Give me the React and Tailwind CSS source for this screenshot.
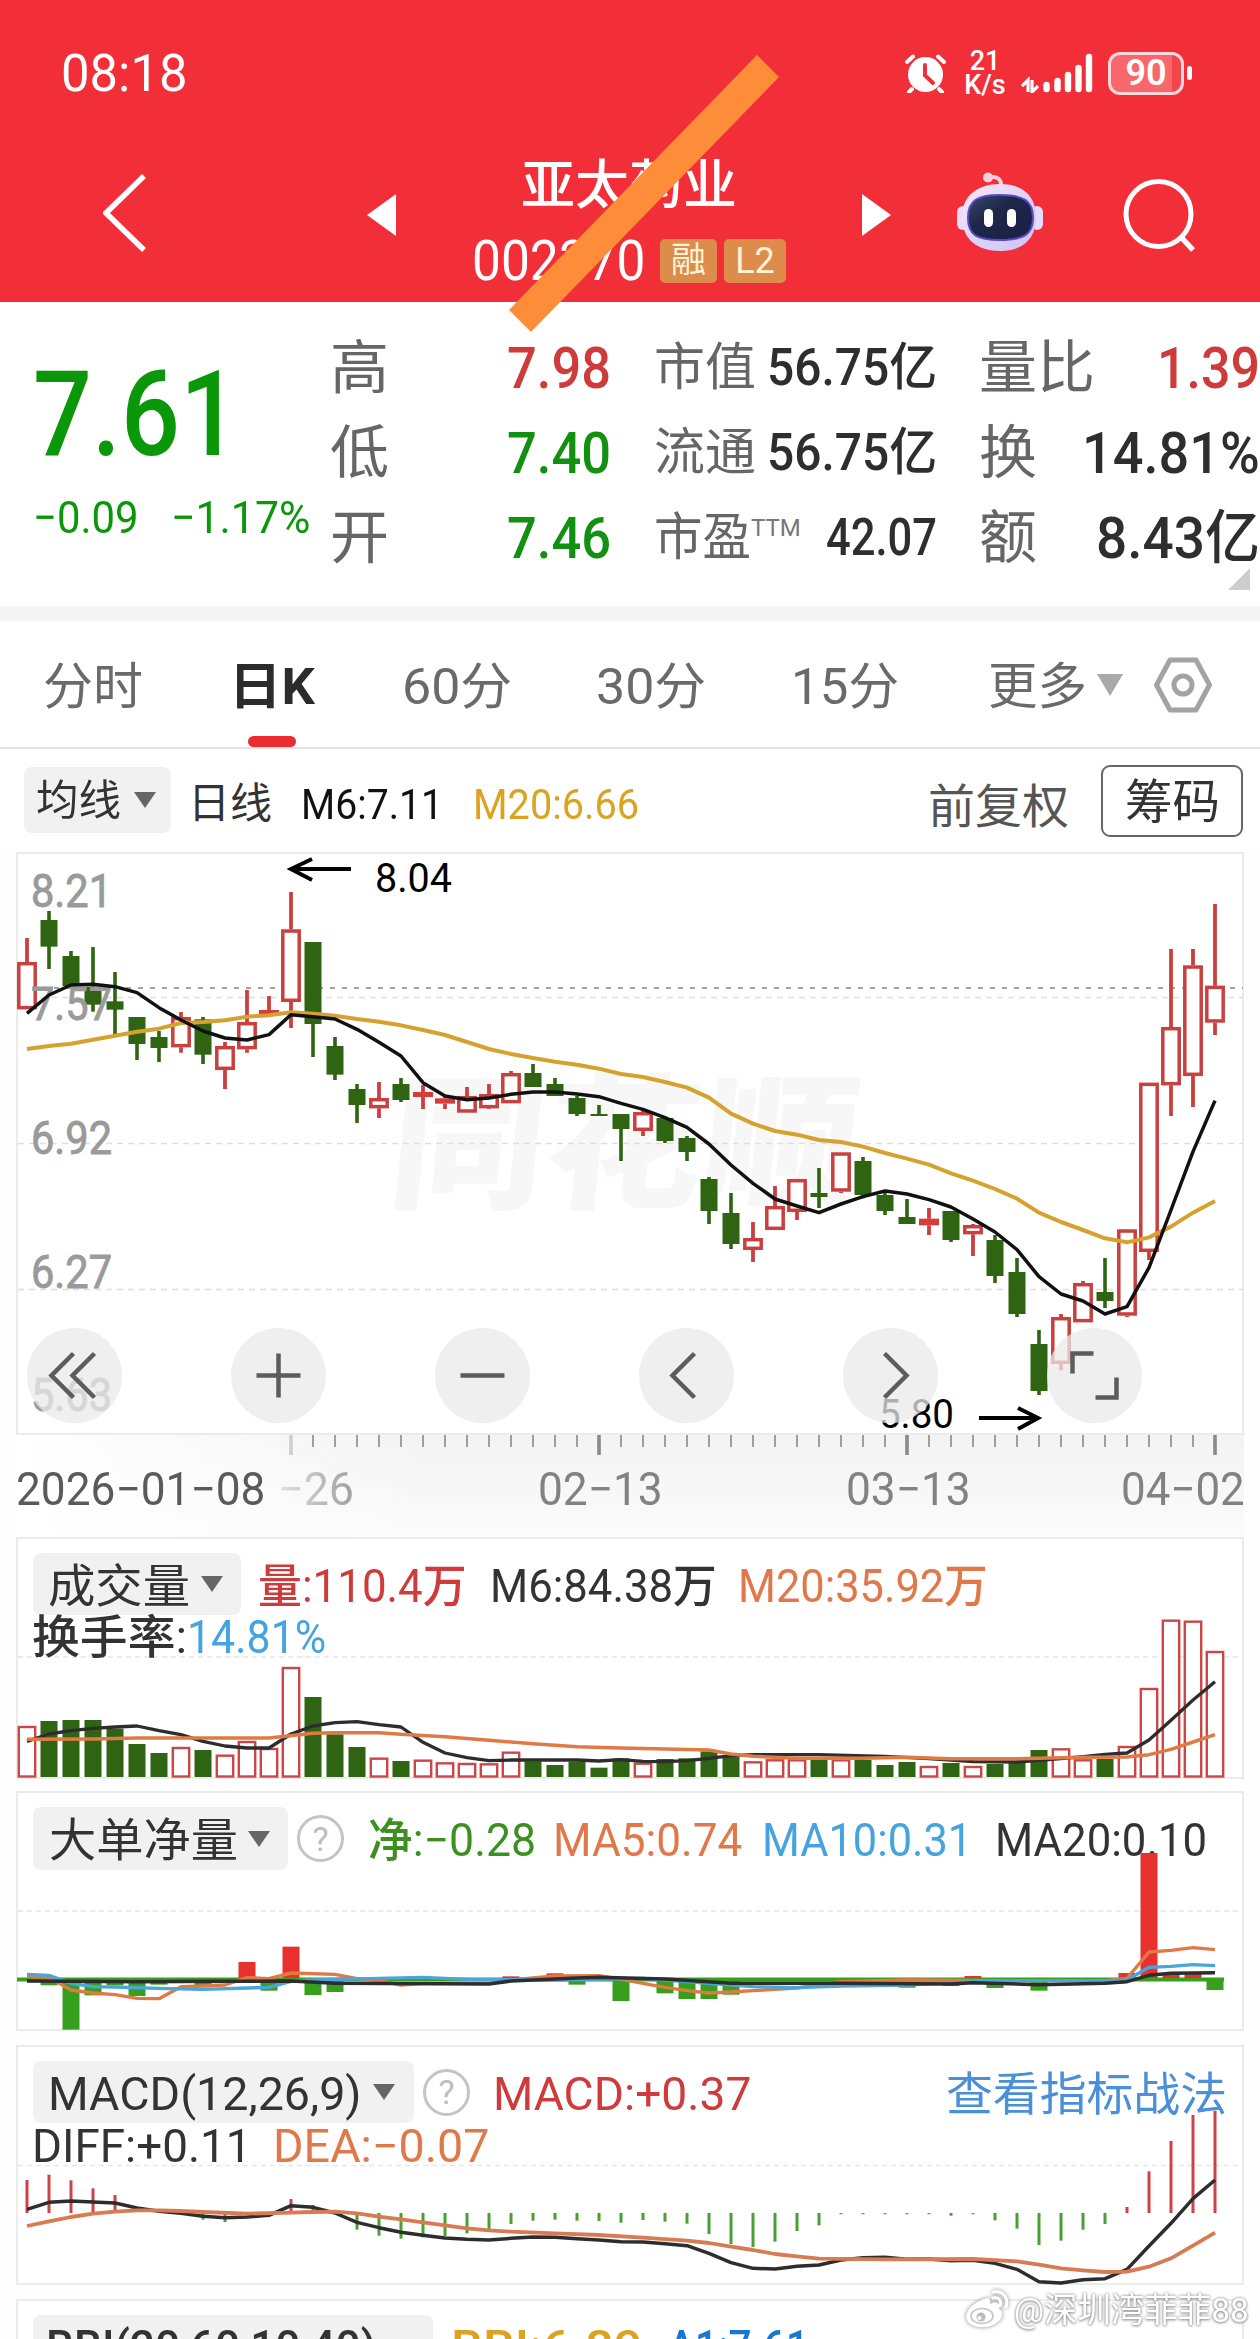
import React, { useLayoutEffect, useRef } from "react";

const RED = "#c9403f";
const GREEN = "#2f6512";
const CX = (i) => 27 + 22 * i;

/* Single line of text stretched or condensed to a fixed advance width. */
function Fit({ w, className = "", inner = "", children }) {
  const ref = useRef(null);
  useLayoutEffect(() => {
    const el = ref.current;
    el.style.transform = "none";
    const n = el.offsetWidth;
    if (n) el.style.transform = `scaleX(${w / n})`;
  }, [w]);
  return (
    <span className={"block shrink-0 leading-none whitespace-nowrap " + className} style={{ width: w }}>
      <span ref={ref} className={"inline-block origin-left align-top leading-none " + inner}>{children}</span>
    </span>
  );
}

function Caret({ className = "", color = "#666" }) {
  return (
    <svg viewBox="0 0 24 16" className={"h-4 w-6 shrink-0 " + className}>
      <path d="M1 0H23L12 16Z" fill={color} />
    </svg>
  );
}

function Help({ className = "" }) {
  return (
    <span className={"flex h-[47px] w-[47px] shrink-0 items-center justify-center rounded-full border-[3px] border-[#c4c4c4] text-[34px] leading-none text-[#bdbdbd] " + className}>
      ?
    </span>
  );
}

/* Series are stored as [index, value] knots or plain arrays, in thirds of a pixel below `top`. */
const toPoints = (data, top) =>
  data.map((d, i) => (Array.isArray(d) ? `${CX(d[0])},${top + d[1] / 3}` : `${CX(i)},${top + d / 3}`)).join(" ");

function Line({ data, top, color, width = 3.5 }) {
  return <polyline points={toPoints(data, top)} fill="none" stroke={color} strokeWidth={width} strokeLinejoin="round" />;
}

/* ---------- status bar + title ---------- */

function StatusBar() {
  return (
    <div className="flex h-[146px] items-center pl-[61px]">
      <Fit w={127} className="mt-[2px] text-[52px] font-[450]">08:18</Fit>
      <svg viewBox="0 0 41 39" className="ml-[717px] h-[39px] w-[41px] shrink-0">
        <circle cx="20.5" cy="20.5" r="17.5" fill="#fff" />
        <path d="M2 8L8 2.5M39 8L33 2.5M7 35L4 38M34 35L37 38" stroke="#fff" strokeWidth="4" strokeLinecap="round" />
        <path d="M20 11V21.5L28 29" stroke="#f22f38" strokeWidth="4" fill="none" strokeLinecap="round" />
      </svg>
      <div className="ml-[18px] flex w-[42px] shrink-0 flex-col items-center pb-[1px] text-[27px] font-medium leading-none">
        <span className="h-[24px] leading-[24px]">21</span>
        <span className="h-[24px] leading-[24px]">K/s</span>
      </div>
      <svg viewBox="0 0 72 40" className="ml-[15px] h-10 w-[72px] shrink-0">
        <g stroke="#fff" strokeLinecap="round" strokeWidth="6.4">
          <path d="M25.500 32V36M36.500 28V36M47 22V36M57.500 15V36M68 4V36" />
        </g>
        <path d="M7 39V27L1 33M11 27V39L17 33" stroke="#fff" strokeWidth="3.200" fill="none" />
      </svg>
      <div className="ml-[15px] flex h-[43px] w-[76px] shrink-0 items-center justify-center rounded-[12px] border-[3px] border-[#ffd9db] bg-[linear-gradient(90deg,#f9676d_0_87%,#f4444c_87%)] text-[36px] font-semibold leading-none">
        90
      </div>
      <div className="ml-[3px] h-[14px] w-[5px] rounded-full bg-white" />
    </div>
  );
}

function Robot() {
  return (
    <svg viewBox="0 0 86 80" className="h-20 w-[86px]">
      <defs>
        <linearGradient id="shell" x1="0" y1="0" x2="1" y2="1">
          <stop offset="0" stopColor="#fbe6f3" />
          <stop offset=".5" stopColor="#dcd6fa" />
          <stop offset="1" stopColor="#d0c0f4" />
        </linearGradient>
        <linearGradient id="visor" x1="0" y1="0" x2="1" y2="1">
          <stop offset="0" stopColor="#3b4a6e" />
          <stop offset=".4" stopColor="#1d2748" />
          <stop offset="1" stopColor="#1a2046" />
        </linearGradient>
      </defs>
      <path d="M31 5C40 4 45 7 44 15" stroke="#f6cfe2" strokeWidth="4" fill="none" />
      <circle cx="31" cy="5.500" r="5" fill="#f9cfdc" />
      <rect x="0" y="34" width="12" height="24" rx="6" fill="#e6dcfa" />
      <rect x="74" y="34" width="12" height="24" rx="6" fill="#e6dcfa" />
      <path d="M43 12C66 12 79 24 79 45C79 67 66 79 43 79C20 79 5 67 5 45C5 24 20 12 43 12Z" fill="url(#shell)" />
      <path d="M43 23C67 23 76 29 76 46C76 63 66 68 43 68C20 68 11 63 11 46C11 29 20 23 43 23Z" fill="url(#visor)" stroke="#5b48c4" strokeWidth="2" />
      <rect x="27" y="37" width="9" height="18" rx="4.500" fill="#fff" />
      <rect x="50" y="37" width="9" height="18" rx="4.500" fill="#fff" />
    </svg>
  );
}

function TitleBar() {
  return (
    <div className="flex h-[156px]">
      <svg viewBox="0 0 44 80" className="ml-[103px] mt-[27px] h-20 w-11 shrink-0">
        <path d="M41 3L3 40L41 77" stroke="#fff" strokeWidth="5.500" fill="none" />
      </svg>
      <svg viewBox="0 0 29 42" className="ml-[220px] mt-12 h-[42px] w-[29px] shrink-0">
        <path d="M29 0V42L0 21Z" fill="#fff" />
      </svg>
      <div className="ml-[76px] flex w-[320px] shrink-0 flex-col">
        <Fit w={216} className="ml-[49px] mt-[14px] text-[53px] font-medium">亚太药业</Fit>
        <div className="mt-[19px] flex items-center">
          <Fit w={173} className="mt-[2px] text-[55px] font-[450]">002370</Fit>
          <span className="ml-[15px] flex h-[44px] w-[57px] items-center justify-center rounded-[5px] bg-[#dd8c4c] text-[35px] leading-none text-[#fff4d6]">融</span>
          <span className="ml-[7px] flex h-[44px] w-[62px] items-center justify-center rounded-[5px] bg-[#dd8c4c] text-[36px] leading-none text-[#fff4d6]">L2</span>
        </div>
      </div>
      <svg viewBox="0 0 29 42" className="ml-[70px] mt-12 h-[42px] w-[29px] shrink-0">
        <path d="M0 0V42L29 21Z" fill="#fff" />
      </svg>
      <div className="ml-[66px] mt-[26px] shrink-0"><Robot /></div>
      <svg viewBox="0 0 74 74" className="ml-[80px] mt-[33px] h-[74px] w-[74px] shrink-0">
        <circle cx="35.500" cy="35" r="32.500" stroke="#fff" strokeWidth="5" fill="none" />
        <path d="M58 58L70 71" stroke="#fff" strokeWidth="5.500" />
      </svg>
    </div>
  );
}

/* ---------- quote summary ---------- */

function Quote() {
  const label = "text-[#666]";
  return (
    <section className="relative flex h-[304px] shrink-0 bg-white pt-[23px]">
      <div className="ml-[33px] w-[297px] shrink-0 text-[#0a970a]">
        <Fit w={206} className="mt-[31px] text-[118px] font-medium">7.61</Fit>
        <div className="mt-[21px] flex text-[45px] font-[450]">
          <Fit w={105}>−0.09</Fit>
          <Fit w={139} className="ml-[33px]">−1.17%</Fit>
        </div>
      </div>
      <div className="flex h-[256px] w-[281px] shrink-0 flex-col">
        {[["高", "7.98", "text-[#cf3a3a]"], ["低", "7.40", "text-[#129012]"], ["开", "7.46", "text-[#129012]"]].map(([k, v, c]) => (
          <div key={k} className="flex h-[85px] items-center text-[58px]">
            <Fit w={59} className={label}>{k}</Fit>
            <Fit w={104} className={"ml-[118px] font-medium " + c}>{v}</Fit>
          </div>
        ))}
      </div>
      <div className="ml-[43px] flex h-[256px] w-[284px] shrink-0 flex-col text-[51px] text-[#2e2e2e]">
        <div className="flex h-[85px] items-center">
          <Fit w={102} className={label}>市值</Fit>
          <Fit w={170} className="ml-[11px] font-medium">56.75亿</Fit>
        </div>
        <div className="flex h-[85px] items-center">
          <Fit w={102} className={label}>流通</Fit>
          <Fit w={170} className="ml-[11px] font-medium">56.75亿</Fit>
        </div>
        <div className="flex h-[85px] items-center">
          <Fit w={97} className={label}>市盈</Fit>
          <Fit w={50} className="mb-[20px] text-[24px] text-[#777]">TTM</Fit>
          <Fit w={111} className="ml-[25px] font-medium">42.07</Fit>
        </div>
      </div>
      <div className="ml-[41px] flex h-[256px] w-[281px] shrink-0 flex-col text-[58px] text-[#2e2e2e]">
        <div className="flex h-[85px] items-center">
          <Fit w={116} className={label}>量比</Fit>
          <Fit w={103} className="ml-[62px] font-medium text-[#cf3a3a]">1.39</Fit>
        </div>
        <div className="flex h-[85px] items-center">
          <Fit w={58} className={label}>换</Fit>
          <Fit w={178} className="ml-[45px] font-medium">14.81%</Fit>
        </div>
        <div className="flex h-[85px] items-center">
          <Fit w={58} className={label}>额</Fit>
          <Fit w={164} className="ml-[59px] font-medium">8.43亿</Fit>
        </div>
      </div>
      <svg viewBox="0 0 22 22" className="absolute bottom-[16px] right-[10px] h-[22px] w-[22px]">
        <path d="M22 0V22H0Z" fill="#cdcdcd" />
      </svg>
    </section>
  );
}

/* ---------- tabs ---------- */

function Tabs() {
  return (
    <nav className="flex h-[128px] shrink-0 border-b-2 border-[#e4e4e4] bg-white text-[50px] text-[#6a6a6a]">
      <Fit w={100} className="ml-[43px] mt-[41px]">分时</Fit>
      <div className="ml-[86px] flex w-[84px] shrink-0 flex-col text-[#2b2b2b]">
        <Fit w={86} className="mt-[41px] font-bold">日K</Fit>
        <div className="ml-[19px] mt-[24px] h-[12px] w-[48px] rounded-[6px] bg-[#ea2c31]" />
      </div>
      <Fit w={110} className="ml-[89px] mt-[41px]">60分</Fit>
      <Fit w={110} className="ml-[84px] mt-[41px]">30分</Fit>
      <Fit w={108} className="ml-[85px] mt-[41px]">15分</Fit>
      <Fit w={99} className="ml-[89px] mt-[41px]">更多</Fit>
      <svg viewBox="0 0 26 22" className="ml-[10px] mt-[53px] h-[22px] w-[26px] shrink-0">
        <path d="M0 0H26L13 22Z" fill="#a9a9a9" />
      </svg>
      <svg viewBox="0 0 58 56" className="ml-[31px] mt-[36px] h-14 w-[58px] shrink-0" fill="none" stroke="#a3a3a3">
        <path d="M16 3H42L55.500 28L42 53H16L2.500 28Z" strokeWidth="5" strokeLinejoin="round" />
        <circle cx="29" cy="28" r="9" strokeWidth="5" />
      </svg>
    </nav>
  );
}

function AverageRow() {
  return (
    <div className="flex h-[102px] shrink-0 items-start bg-white text-[#333]">
      <button className="ml-6 mt-[18px] flex h-[66px] w-[147px] shrink-0 items-center rounded-[8px] bg-[#f1f1f1] pl-3 pt-[2px] text-[42px]">
        <Fit w={85}>均线</Fit>
        <Caret className="ml-[12px] -mt-[2px]" />
      </button>
      <Fit w={84} className="ml-[17px] mt-[34px] text-[42px]">日线</Fit>
      <Fit w={142} className="ml-[29px] mt-[34px] text-[43px] font-[450] text-[#111]">M6:7.11</Fit>
      <Fit w={166} className="ml-[30px] mt-[34px] text-[43px] font-[450] text-[#dba31f]">M20:6.66</Fit>
      <Fit w={141} className="ml-[289px] mt-[34px] text-[47px] text-[#555]">前复权</Fit>
      <button className="ml-[32px] mt-[16px] flex h-[72px] w-[142px] shrink-0 items-center justify-center rounded-[9px] border-2 border-[#666] text-[47px]">
        <Fit w={95}>筹码</Fit>
      </button>
    </div>
  );
}

/* ---------- candles ---------- */

/* [rising, high, body top, body bottom, low] */
const CANDLES = [
  [1, 294, 366, 508, 508], [0, 213, 240, 320, 387], [0, 333, 348, 438, 438], [0, 321, 440, 494, 515],
  [0, 396, 484, 509, 585], [0, 531, 531, 612, 660], [0, 573, 591, 624, 666], [1, 516, 531, 622, 638],
  [0, 531, 538, 644, 672], [1, 606, 618, 690, 747], [1, 450, 546, 628, 638], [1, 468, 510, 526, 526],
  [1, 156, 268, 486, 564], [0, 306, 306, 552, 651], [0, 591, 618, 704, 720], [0, 732, 747, 795, 849],
  [1, 726, 774, 805, 834], [0, 714, 732, 780, 786], [1, 735, 756, 771, 807], [1, 768, 775, 791, 807],
  [1, 741, 768, 818, 818], [1, 732, 762, 805, 807], [1, 693, 699, 790, 790], [0, 672, 699, 741, 741],
  [0, 714, 732, 768, 768], [0, 768, 774, 822, 828], [0, 795, 822, 828, 828], [0, 822, 822, 867, 963],
  [1, 810, 816, 873, 888], [0, 834, 834, 903, 909], [0, 888, 894, 936, 963], [0, 1011, 1017, 1113, 1152],
  [0, 1059, 1119, 1212, 1227], [1, 1146, 1194, 1230, 1266], [1, 1038, 1098, 1170, 1170], [1, 1017, 1017, 1116, 1140],
  [0, 984, 1059, 1071, 1104], [1, 937, 937, 1055, 1059], [0, 951, 963, 1065, 1075], [0, 1059, 1065, 1113, 1125],
  [0, 1077, 1131, 1152, 1152], [1, 1104, 1136, 1156, 1185], [0, 1113, 1113, 1200, 1206], [1, 1152, 1155, 1183, 1248],
  [0, 1185, 1200, 1308, 1329], [0, 1254, 1296, 1422, 1431], [0, 1470, 1512, 1653, 1665], [1, 1422, 1431, 1572, 1591],
  [1, 1323, 1329, 1447, 1447], [0, 1254, 1356, 1383, 1404], [1, 1167, 1168, 1427, 1431], [1, 728, 728, 1236, 1260],
  [1, 327, 561, 736, 828], [1, 327, 376, 708, 801], [1, 192, 437, 548, 585],
];
const MA6 = [520, 465, 435, 433, 440, 458, 503, 540, 573, 594, 600, 584, 524, 530, 537, 568, 607, 648, 728, 768, 779, 774, 763, 756, 756, 762, 770, 790, 808, 833, 862, 912, 975, 1030, 1077, 1098, 1118, 1092, 1070, 1053, 1062, 1079, 1101, 1137, 1176, 1229, 1310, 1362, 1383, 1422, 1400, 1283, 1110, 935, 782];
const MA20 = [627, 618, 611, 599, 587, 575, 566, 549, 546, 541, 530, 526, 517, 521, 527, 537, 545, 556, 570, 585, 606, 627, 642, 654, 665, 674, 686, 702, 711, 726, 743, 773, 821, 851, 873, 884, 900, 906, 920, 939, 956, 974, 1000, 1022, 1047, 1076, 1118, 1146, 1170, 1195, 1207, 1192, 1160, 1118, 1083];

function Candle({ i, c }) {
  const [up, h, t, b, l] = c;
  const y = (v) => 840 + v / 3;
  const x = CX(i);
  const bodyH = y(b) - y(t);
  if (!up) {
    return (
      <g fill={GREEN}>
        <rect x={x - 1.8} y={y(h)} width="3.600" height={y(l) - y(h)} />
        <rect x={x - 8.5} y={y(t)} width="17" height={bodyH} />
      </g>
    );
  }
  return (
    <g>
      <path d={`M${x} ${y(h)}V${y(t)}M${x} ${y(b)}V${y(l)}`} stroke={RED} strokeWidth="3.800" />
      {bodyH < 8 ? (
        <rect x={x - 10} y={y(t)} width="20" height={bodyH} fill="#d93a3a" />
      ) : (
        <rect x={x - 8.2} y={y(t) + 1.7} width="16.400" height={bodyH - 3.4} fill="#fff" stroke={RED} strokeWidth="3.500" />
      )}
    </g>
  );
}

const CONTROLS = [
  ["first", "M-1 -22L-23 0L-1 22M20 -22L-2 0L20 22"],
  ["zoom in", "M-22 0H22M0 -22V22"],
  ["zoom out", "M-22 0H22"],
  ["back", "M8 -22L-14 0L8 22"],
  ["forward", "M-6 -22L16 0L-6 22"],
  ["fullscreen", "M-1 -22H-22V-2M22 2V22H1"],
];

function CandlePanel() {
  return (
    <section className="relative mx-4 mt-[1px] h-[583px] shrink-0 border-2 border-[#ebebeb] bg-white">
      <svg viewBox="0 854 1260 583" className="absolute -left-[18px] top-0 h-[583px] w-[1260px] overflow-visible">
        <text x="386" y="1197" textLength="468" lengthAdjust="spacingAndGlyphs" fontSize="146" fontWeight="900" fill="#f7f7f7" transform="skewX(-6) translate(125 0)">同花顺</text>
        <g strokeDasharray="6 5" stroke="#dedede" strokeWidth="1.500">
          <path d="M18 997.500H1243M18 1143.500H1243M18 1289.500H1243" />
        </g>
        <path d="M18 988H1243" stroke="#a2a890" strokeWidth="2" strokeDasharray="5 7" />
        {CANDLES.map((c, i) => <Candle key={i} i={i} c={c} />)}
        <g fontSize="46" fill="#9a9a9a" stroke="#9a9a9a" strokeWidth=".9">
          {[["8.21", 907], ["7.57", 1020], ["6.92", 1154], ["6.27", 1288], ["5.63", 1411]].map(([t, y]) => (
            <text key={t} x="31" y={y} textLength="81" lengthAdjust="spacingAndGlyphs">{t}</text>
          ))}
        </g>
        <Line data={MA20} top={840} color="#d6a22d" width={4} />
        <Line data={MA6} top={840} color="#111" />
        <g stroke="#000" strokeWidth="4" fill="none">
          <path d="M351 869H291M312 859L291 869L312 880M979 1418H1038M1018 1408L1038 1418L1018 1429" />
        </g>
        <g fontSize="40" fill="#000">
          <text x="375" y="892" textLength="77" lengthAdjust="spacingAndGlyphs">8.04</text>
          <text x="879" y="1428" textLength="75" lengthAdjust="spacingAndGlyphs">5.80</text>
        </g>
      </svg>
      <div className="relative mt-[474px] flex gap-[109px] pl-[9px]">
        {CONTROLS.map(([name, d]) => (
          <button key={name} aria-label={name} className="h-[95px] w-[95px] shrink-0 rounded-full bg-[#e9e9e9]/75">
            <svg viewBox="-47.500 -47.500 95 95" className="h-full w-full">
              <path d={d} fill="none" stroke="#5c5c5c" strokeWidth="4.500" />
            </svg>
          </button>
        ))}
      </div>
    </section>
  );
}

function DateAxis() {
  const ticks = Array.from({ length: 43 }, (_, k) => k + 12);
  return (
    <div className="relative mx-4 h-[102px] shrink-0 bg-gradient-to-b from-[#f3f3f3] to-[#fbfbfb]">
      <div className="absolute inset-y-0 left-0 w-[420px] bg-gradient-to-r from-white to-transparent" />
      <svg viewBox="0 1435 1260 20" className="absolute -left-4 top-0 h-5 w-[1260px]">
        {ticks.map((i) => {
          const major = (i - 12) % 14 === 0;
          return <rect key={i} x={CX(i) - (major ? 1.8 : 0.8)} y="1435" width={major ? 3.6 : 1.6} height={major ? 20 : 12} fill={i === 12 ? "#cfcfcf" : "#8a8a8a"} />;
        })}
      </svg>
      <div className="relative flex pt-[31px] text-[46px] text-[#828282]">
        <Fit w={249} className="font-[450] text-[#5a5a5a]">2026−01−08</Fit>
        <Fit w={76} className="ml-[13px]" inner="bg-gradient-to-r from-[#e2e2e2] to-[#a0a0a0] bg-clip-text text-transparent">−26</Fit>
        <Fit w={125} className="ml-[184px] font-[450]">02−13</Fit>
        <Fit w={125} className="ml-[183px] font-[450]">03−13</Fit>
        <Fit w={124} className="ml-[150px] font-[450]">04−02</Fit>
      </div>
    </div>
  );
}

/* ---------- volume ---------- */

/* negative = falling session */
const VOLUME = [588, -573, -570, -570, -596, -642, -669, 651, -660, 674, 633, 654, 411, -501, -613, -651, 683, -693, 689, 697, 699, 700, 665, -694, -705, -695, -713, -685, 698, -687, -685, -664, -680, 694, 688, 688, -690, 688, -690, -705, -696, 708, -699, 708, -702, -696, -660, 655, 688, -687, 648, 474, 269, 272, 363];
const VOL_MA6 = [[0, 634], [1, 612], [2, 602], [3, 595], [4, 591], [5, 588], [6, 602], [7, 614], [8, 634], [9, 648], [10, 654], [11, 654], [12, 612], [13, 588], [14, 578], [15, 575], [16, 584], [17, 591], [18, 637], [19, 669], [20, 683], [21, 692], [22, 690], [25, 690], [26, 693], [27, 689], [28, 694], [29, 695], [30, 692], [31, 685], [32, 677], [33, 674], [36, 674], [39, 679], [41, 686], [43, 695], [45, 696], [47, 686], [48, 680], [49, 673], [50, 669], [51, 630], [52, 571], [53, 510], [54, 455]];
const VOL_MA20 = [[0, 628], [3, 627], [5, 624], [11, 624], [13, 610], [14, 608], [16, 608], [17, 613], [19, 620], [21, 631], [23, 641], [25, 650], [27, 654], [29, 657], [31, 660], [32, 672], [33, 679], [35, 685], [38, 685], [40, 682], [42, 686], [45, 686], [48, 682], [50, 681], [51, 674], [52, 658], [53, 636], [54, 614]];

function VolumePanel() {
  return (
    <section className="relative mx-4 h-[242px] shrink-0 border-2 border-[#ebebeb] bg-white">
      <svg viewBox="0 1539 1260 240" className="absolute -left-[18px] top-0 h-60 w-[1260px] overflow-visible">
        <path d="M18 1657H1243" stroke="#e6e6e6" strokeWidth="1.500" strokeDasharray="5 4" />
        {VOLUME.map((v, i) => {
          const y = 1530 + Math.abs(v) / 3;
          return v < 0 ? (
            <rect key={i} x={CX(i) - 8.5} y={y} width="17" height={1777 - y} fill={GREEN} />
          ) : (
            <rect key={i} x={CX(i) - 8.2} y={y + 1} width="16.400" height={1775.5 - y} fill="#fff" stroke="#cc4547" strokeWidth="2.400" />
          );
        })}
        <Line data={VOL_MA6} top={1530} color="#2d2d2d" width={3.3} />
        <Line data={VOL_MA20} top={1530} color="#e07a45" width={3.5} />
      </svg>
      <div className="relative mt-[14px] flex h-[62px] items-center pl-[15px] text-[46px] text-[#333]">
        <button className="flex h-[62px] w-[208px] shrink-0 items-center rounded-[8px] bg-[#f1f1f1] pl-[13px] pt-[3px]">
          <Fit w={142}>成交量</Fit>
          <Caret className="-mt-[3px] ml-[12px]" />
        </button>
        <Fit w={209} className="ml-[17px] mt-[3px] font-[450] text-[#cf3a3a]">量:110.4万</Fit>
        <Fit w={227} className="ml-[23px] mt-[3px] font-[450]">M6:84.38万</Fit>
        <Fit w={250} className="ml-[21px] mt-[3px] font-[450] text-[#e0784a]">M20:35.92万</Fit>
      </div>
      <div className="relative -mt-[1px] flex pl-[14px] text-[46px] font-[450] text-[#333]">
        <Fit w={155}>换手率:</Fit>
        <Fit w={139}>
          <span className="text-[#45a3df]">14.81%</span>
        </Fit>
      </div>
    </section>
  );
}

/* ---------- large-order net volume ---------- */

const NET = { 1: 586, 2: 719, 3: 616, 4: 586, 5: 618, 6: 584, 8: 585, 10: 516, 11: 602, 12: 470, 13: 615, 14: 606, 22: 559, 24: 550, 25: 584, 27: 633, 29: 610, 30: 627, 31: 627, 32: 614, 40: 593, 42: 588, 43: 558, 44: 594, 46: 602, 50: 549, 51: 189, 52: 549, 53: 549, 54: 600 };
const NET5 = [[0, 560], [1, 562], [2, 600], [3, 609], [4, 614], [5, 625], [6, 626], [7, 590], [8, 588], [9, 585], [10, 563], [11, 566], [12, 549], [14, 553], [15, 566], [16, 572], [17, 585], [18, 580], [21, 580], [22, 570], [24, 558], [26, 557], [27, 568], [28, 580], [29, 592], [30, 602], [31, 609], [32, 606], [33, 602], [35, 594], [37, 575], [40, 570], [44, 572], [49, 572], [50, 565], [51, 486], [52, 481], [53, 473], [54, 479]];
const NET10 = [[0, 553], [1, 556], [2, 580], [3, 590], [4, 591], [6, 595], [8, 598], [11, 592], [12, 574], [13, 570], [16, 565], [18, 562], [20, 568], [24, 570], [28, 565], [31, 580], [33, 590], [35, 593], [37, 588], [40, 585], [44, 572], [49, 572], [50, 570], [51, 532], [52, 529], [53, 524], [54, 527]];
const NET20 = [[0, 573], [5, 575], [9, 574], [12, 573], [14, 580], [21, 582], [22, 573], [25, 564], [26, 562], [29, 567], [32, 580], [37, 580], [42, 582], [43, 578], [46, 584], [49, 580], [50, 575], [51, 556], [52, 550], [54, 548]];

function NetPanel() {
  return (
    <section className="relative mx-4 mt-[12px] h-[240px] shrink-0 border-2 border-[#ebebeb] bg-white">
      <div className="mt-[14px] flex h-[63px] items-center pl-[15px] text-[46px] text-[#333]">
        <button className="flex h-[63px] w-[255px] shrink-0 items-center rounded-[8px] bg-[#f1f1f1] pl-[13px] pt-[2px]">
          <Fit w={189}>大单净量</Fit>
          <Caret className="-mt-[2px] ml-[12px]" />
        </button>
        <Help className="ml-[9px]" />
        <Fit w={168} className="ml-[24px] mt-[3px] font-[450] text-[#3b9020]">净:−0.28</Fit>
        <Fit w={189} className="ml-[17px] mt-[3px] font-[450] text-[#e0784a]">MA5:0.74</Fit>
        <Fit w={210} className="ml-[20px] mt-[3px] font-[450] text-[#45a3df]">MA10:0.31</Fit>
        <Fit w={212} className="ml-[23px] mt-[3px] font-[450]">MA20:0.10</Fit>
      </div>
      <svg viewBox="0 1793 1260 238" className="absolute -left-[18px] top-0 h-[238px] w-[1260px] overflow-visible">
        <path d="M18 1911H1243" stroke="#e6e6e6" strokeWidth="1.500" strokeDasharray="5 4" />
        <path d="M17 1979.500H1224" stroke="#36a01c" strokeWidth="4" />
        {Object.entries(NET).map(([i, v]) => {
          const y = 1790 + v / 3;
          return v < 568 ? (
            <rect key={i} x={CX(+i) - 8.5} y={y} width="17" height={1978 - y} fill="#e8302f" />
          ) : (
            <rect key={i} x={CX(+i) - 8.5} y="1979" width="17" height={y - 1979} fill="#36a01c" />
          );
        })}
        <Line data={NET5} top={1790} color="#e07a45" width={3.4} />
        <Line data={NET10} top={1790} color="#4aa5d8" width={3.4} />
        <Line data={NET20} top={1790} color="#2d2d2d" width={3.5} />
      </svg>
    </section>
  );
}

/* ---------- MACD ---------- */

const HIST = [420, 404, 421, 445, 465, 0, 0, 0, 539, 546, 0, 0, 477, 495, 0, 569, 587, 596, 592, 588, 580, 572, 552, 542, 539, 542, 543, 548, 540, 545, 551, 582, 612, 621, 605, 573, 556, 523, 523, 523, 523, 523, 527, 523, 541, 566, 615, 602, 569, 552, 501, 394, 303, 225, 213];
const DIFF = [508, 487, 483, 486, 489, 504, 514, 520, 529, 533, 531, 526, 497, 502, 519, 547, 563, 577, 586, 594, 598, 600, 595, 591, 592, 596, 600, 605, 606, 611, 617, 640, 668, 685, 687, 679, 675, 660, 653, 652, 658, 657, 662, 661, 670, 688, 725, 729, 719, 716, 688, 618, 550, 476, 420];
const DEA = [[0, 558], [1, 544], [2, 531], [3, 521], [4, 515], [5, 511], [6, 511], [7, 513], [8, 516], [10, 521], [12, 518], [13, 516], [14, 515], [15, 520], [16, 530], [17, 538], [18, 547], [19, 556], [20, 565], [21, 571], [22, 575], [24, 580], [26, 585], [28, 593], [30, 602], [31, 609], [32, 620], [33, 630], [34, 642], [35, 649], [36, 656], [39, 658], [43, 657], [45, 664], [46, 674], [47, 685], [48, 691], [49, 696], [50, 695], [51, 680], [52, 655], [53, 617], [54, 578]];

function MacdPanel() {
  return (
    <section className="relative mx-4 mt-[14px] h-[240px] shrink-0 border-2 border-[#ebebeb] bg-white">
      <div className="mt-[14px] flex h-[62px] items-center pl-[15px] text-[46px] text-[#333]">
        <button className="flex h-[62px] w-[381px] shrink-0 items-center rounded-[8px] bg-[#f1f1f1] pl-[13px] pt-[3px]">
          <Fit w={314} className="font-[450]">MACD(12,26,9)</Fit>
          <Caret className="-mt-[3px] ml-[12px]" />
        </button>
        <Help className="ml-[9px]" />
        <Fit w={258} className="ml-[23px] mt-[3px] font-[450] text-[#cf3a3a]">MACD:+0.37</Fit>
        <Fit w={281} className="ml-[195px] mt-[3px] text-[#4a90d9]">查看指标战法</Fit>
      </div>
      <div className="flex pl-[14px] text-[46px] font-[450] text-[#333]">
        <Fit w={219}>DIFF:+0.11</Fit>
        <Fit w={216} className="ml-[22px] text-[#e0784a]">DEA:−0.07</Fit>
      </div>
      <svg viewBox="0 2047 1260 238" className="absolute -left-[18px] top-0 h-[238px] w-[1260px] overflow-visible">
        <path d="M18 2165.500H1243" stroke="#e6e6e6" strokeWidth="1.500" strokeDasharray="5 4" />
        {HIST.map((v, i) =>
          v ? (
            <path key={i} d={`M${CX(i)} 2213V${2040 + v / 3}`} stroke={v < 519 ? "#cf4346" : v < 525 ? "#8a8a8a" : "#47a02f"} strokeWidth="3" />
          ) : null
        )}
        <Line data={DIFF} top={2040} color="#2d2d2d" width={3.5} />
        <Line data={DEA} top={2040} color="#d97b52" width={3.8} />
      </svg>
    </section>
  );
}

function BbiPanel() {
  return (
    <section className="relative mx-4 mt-[14px] h-[100px] shrink-0 border-2 border-[#ebebeb] bg-white">
      <div className="mt-[14px] flex h-[62px] items-center pl-[15px] text-[46px] text-[#333]">
        <button className="flex h-[62px] w-[400px] shrink-0 items-center rounded-[8px] bg-[#f1f1f1] pl-[13px] pt-[2px] font-medium">
          <Fit w={330}>BBI(20,60,10,40)</Fit>
          <Caret className="ml-[12px]" />
        </button>
        <Fit w={191} className="ml-[18px] mt-[2px] font-medium text-[#dba31f]">BBI:6.89</Fit>
        <Fit w={141} className="ml-[26px] mt-[2px] font-medium text-[#1777d2]">A1:7.61</Fit>
      </div>
    </section>
  );
}

function Credit() {
  return (
    <div className="absolute bottom-[10px] right-[11px] flex items-center text-[34px] text-white [text-shadow:0_0_3px_#888,0_1px_3px_#999]">
      <svg viewBox="0 0 44 38" className="mr-[5px] h-[38px] w-11 overflow-visible drop-shadow-[0_0_2px_#888]">
        <path d="M17 9C23 5 27 8 25 13C32 10 36 12 34 18C39 20 38 27 33 31C25 38 9 38 3 31C-3 23 7 12 17 9Z" fill="#fff" />
        <ellipse cx="17" cy="25" rx="11" ry="7.500" fill="none" stroke="#c4c4c4" strokeWidth="1.500" />
        <circle cx="16" cy="26" r="4.500" fill="#bbb" />
        <circle cx="14.500" cy="27" r="2" fill="#fff" />
        <path d="M28 1C38 -1 44 7 41 16M28 7C34 6 37 10 35 15" stroke="#fff" strokeWidth="3" fill="none" strokeLinecap="round" />
      </svg>
      <Fit w={235}>@深圳湾菲菲88</Fit>
    </div>
  );
}

export default function App() {
  return (
    <main className="relative flex h-[2339px] w-[1260px] flex-col overflow-hidden bg-[#fefefe] font-['Roboto','Noto_Sans_CJK_SC',sans-serif]">
      <header className="relative z-10 h-[302px] shrink-0 bg-[#f22f38] text-white">
        <StatusBar />
        <TitleBar />
        <svg viewBox="509 55 271 278" className="absolute left-[509px] top-[55px] h-[278px] w-[271px]">
          <path d="M757 55L779 77L531 332L509 310Z" fill="#fe8d3a" />
        </svg>
      </header>
      <Quote />
      <div className="h-[15px] shrink-0 bg-[#f4f4f4]" />
      <Tabs />
      <AverageRow />
      <CandlePanel />
      <DateAxis />
      <VolumePanel />
      <NetPanel />
      <MacdPanel />
      <BbiPanel />
      <Credit />
    </main>
  );
}
